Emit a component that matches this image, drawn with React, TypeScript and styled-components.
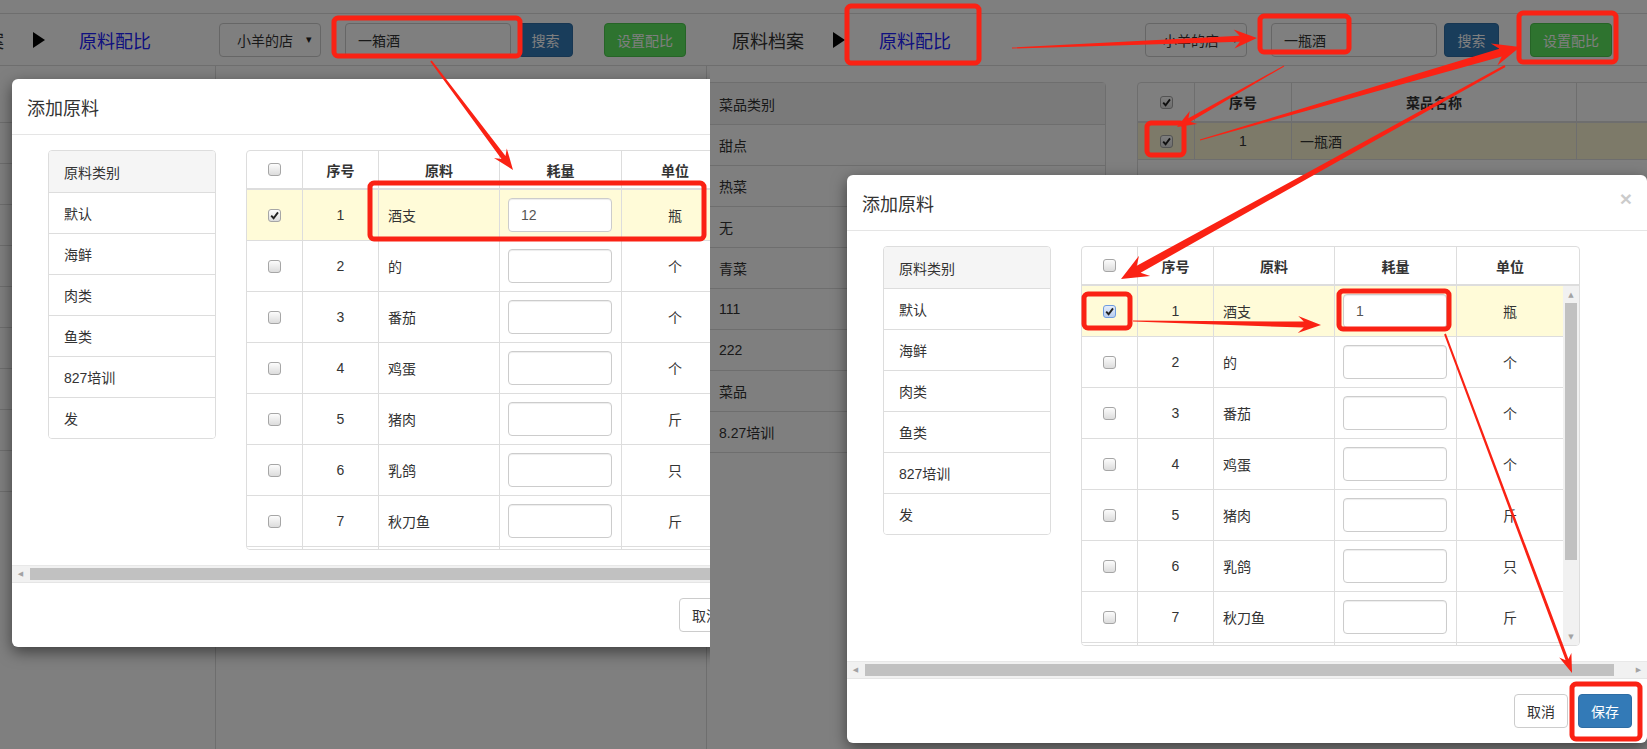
import React from "react"
import styled, { createGlobalStyle } from "styled-components"

const GlobalStyle = createGlobalStyle`
  * { box-sizing: border-box; }
  body {
    margin: 0;
    background: #808080;
    color: #333;
    font-family: "Liberation Sans", Arial, "Noto Sans CJK SC", sans-serif;
    font-size: 14px;
  }
`

const categories = ["默认", "海鲜", "肉类", "鱼类", "827培训", "发"]

const materials = [
  { no: 1, name: "酒支", unit: "瓶" },
  { no: 2, name: "的", unit: "个" },
  { no: 3, name: "番茄", unit: "个" },
  { no: 4, name: "鸡蛋", unit: "个" },
  { no: 5, name: "猪肉", unit: "斤" },
  { no: 6, name: "乳鸽", unit: "只" },
  { no: 7, name: "秋刀鱼", unit: "斤" },
  { no: 8, name: "牛肉", unit: "斤" },
]

const dishCategories = ["甜点", "热菜", "无", "青菜", "111", "222", "菜品", "8.27培训"]

// red marks drawn on top of the two screenshots
const boxes = [
  [334, 18, 186, 38],
  [370, 183, 334, 56],
  [847, 6, 132, 57],
  [1260, 16, 89, 36],
  [1519, 13, 97, 49],
  [1147, 123, 37, 32],
  [1084, 294, 46, 34],
  [1339, 291, 110, 38],
  [1572, 684, 68, 55],
]

type Arrow = { from: [number, number]; to: [number, number]; w1: number; w2: number; head: number; hw: number }

const arrows: Arrow[] = [
  { from: [431, 61], to: [513, 170], w1: 2, w2: 5, head: 21, hw: 16 },
  { from: [1012, 48], to: [1257, 38], w1: 1, w2: 6, head: 23, hw: 19 },
  { from: [1284, 66], to: [1177, 127], w1: 1, w2: 4, head: 19, hw: 15 },
  { from: [1200, 140], to: [1520, 47], w1: 1, w2: 8, head: 27, hw: 23 },
  { from: [1505, 66], to: [1121, 279], w1: 2, w2: 8, head: 27, hw: 23 },
  { from: [1133, 321], to: [1321, 325], w1: 1, w2: 6, head: 23, hw: 17 },
  { from: [1445, 334], to: [1572, 673], w1: 2, w2: 3, head: 19, hw: 13 },
]

function arrowPoints({ from, to, w1, w2, head, hw }: Arrow) {
  const [x1, y1] = from
  const [x2, y2] = to
  const len = Math.hypot(x2 - x1, y2 - y1)
  const ux = (x2 - x1) / len
  const uy = (y2 - y1) / len
  const nx = -uy
  const ny = ux
  const jx = x2 - ux * head * 0.75
  const jy = y2 - uy * head * 0.75
  const bx = x2 - ux * head
  const by = y2 - uy * head
  const pts = [
    [x1 + (nx * w1) / 2, y1 + (ny * w1) / 2],
    [jx + (nx * w2) / 2, jy + (ny * w2) / 2],
    [bx + (nx * hw) / 2, by + (ny * hw) / 2],
    [x2, y2],
    [bx - (nx * hw) / 2, by - (ny * hw) / 2],
    [jx - (nx * w2) / 2, jy - (ny * w2) / 2],
    [x1 - (nx * w1) / 2, y1 - (ny * w1) / 2],
  ]
  return pts.map((p) => p.map((v) => v.toFixed(1)).join(",")).join(" ")
}

function CheckMark({ checked, focus }: { checked?: boolean; focus?: boolean }) {
  return (
    <CheckBox $focus={focus}>
      {checked && (
        <svg width="9" height="9" viewBox="0 0 9 9">
          <path d="M1.2 4.6 L3.6 7.2 L8 1.4" stroke="#222" strokeWidth="1.9" fill="none" />
        </svg>
      )}
    </CheckBox>
  )
}

function PageHeader({ shift, gap, keyword }: { shift: number; gap: number; keyword: string }) {
  return (
    <Header>
      <Crumbs $shift={shift}>
        <span>原料档案</span>
        <CrumbArrow width="12" height="16" viewBox="0 0 12 16">
          <polygon points="0,0 12,8 0,16" fill="#000" />
        </CrumbArrow>
        <CrumbActive>原料配比</CrumbActive>
      </Crumbs>
      <Controls $gap={gap}>
        <StoreSelect>
          <span>小羊的店</span>
          <Caret>▾</Caret>
        </StoreSelect>
        <SearchBox>{keyword}</SearchBox>
        <PageButton $variant="primary" $w={55}>搜索</PageButton>
        <PageButton $variant="success" $w={82}>设置配比</PageButton>
      </Controls>
    </Header>
  )
}

function AddMaterialModal({ top, left, qty, focus }: { top: number; left: number; qty: string; focus?: boolean }) {
  return (
    <Modal $top={top} $left={left}>
      <ModalHeader>
        <ModalTitle>添加原料</ModalTitle>
        <CloseX>×</CloseX>
      </ModalHeader>
      <ModalBody>
        <CategoryList>
          <CategoryItem $head>原料类别</CategoryItem>
          {categories.map((c) => (
            <CategoryItem key={c}>{c}</CategoryItem>
          ))}
        </CategoryList>
        <MaterialTable>
          <HeadRow>
            <HeadCell><CheckMark /></HeadCell>
            <HeadCell>序号</HeadCell>
            <HeadCell>原料</HeadCell>
            <HeadCell>耗量</HeadCell>
            <HeadCell $last>单位</HeadCell>
            <span />
          </HeadRow>
          <BodyArea>
            <Rows>
              {materials.map((m, i) => (
                <BodyRow key={m.no} $selected={i === 0}>
                  <Cell $align="center"><CheckMark checked={i === 0} focus={focus && i === 0} /></Cell>
                  <Cell $align="center">{m.no}</Cell>
                  <Cell>{m.name}</Cell>
                  <Cell $pad={8}><QtyInput readOnly value={i === 0 ? qty : ""} /></Cell>
                  <Cell $align="center" $last>{m.unit}</Cell>
                </BodyRow>
              ))}
            </Rows>
            <VScroll>
              <ScrollArrow>▲</ScrollArrow>
              <VThumb />
              <ScrollArrow $end>▼</ScrollArrow>
            </VScroll>
          </BodyArea>
        </MaterialTable>
      </ModalBody>
      <HScroll>
        <ScrollArrow $wide>◀</ScrollArrow>
        <HThumb />
        <ScrollArrow $wide $end>▶</ScrollArrow>
      </HScroll>
      <ModalFooter>
        <FooterButton $primary={false}>取消</FooterButton>
        <FooterButton $primary>保存</FooterButton>
      </ModalFooter>
    </Modal>
  )
}

export default function App() {
  return (
    <Canvas>
      <GlobalStyle />
      <Shot $width={710}>
        <Page>
          <TopStrip />
          <PageHeader shift={-68} gap={68} keyword="一箱酒" />
          <LeftBody>
            <SideCol>
              {Array.from({ length: 10 }).map((_, i) => (
                <SideRow key={i} />
              ))}
            </SideCol>
            <MainCol />
          </LeftBody>
        </Page>
        <Backdrop />
        <AddMaterialModal top={79} left={12} qty="12" />
      </Shot>
      <Shot $width={937}>
        <Page>
          <TopStrip />
          <PageHeader shift={22} gap={194} keyword="一瓶酒" />
          <RightBody>
            <DishPanel>
              <DishRow $head>菜品类别</DishRow>
              {dishCategories.map((d) => (
                <DishRow key={d}>{d}</DishRow>
              ))}
            </DishPanel>
            <DishTable>
              <DishHead>
                <DishCell $align="center"><CheckMark checked /></DishCell>
                <DishCell $align="center">序号</DishCell>
                <DishCell $align="center">菜品名称</DishCell>
                <DishCell />
              </DishHead>
              <DishBodyRow $selected>
                <DishCell $align="center"><CheckMark checked /></DishCell>
                <DishCell $align="center">1</DishCell>
                <DishCell>一瓶酒</DishCell>
                <DishCell />
              </DishBodyRow>
            </DishTable>
          </RightBody>
        </Page>
        <Backdrop />
        <AddMaterialModal top={175} left={137} qty="1" focus />
      </Shot>
      <Marks width="1647" height="749" viewBox="0 0 1647 749">
        {boxes.map(([x, y, w, h], i) => (
          <rect key={i} x={x} y={y} width={w} height={h} rx="4" fill="none" stroke="#fa2214" strokeWidth="5" />
        ))}
        {arrows.map((a, i) => (
          <polygon key={i} points={arrowPoints(a)} fill="#fa2214" />
        ))}
      </Marks>
    </Canvas>
  )
}

const Canvas = styled.div`
  position: relative;
  display: flex;
  width: 1647px;
  height: 749px;
  overflow: hidden;
`

const Shot = styled.div<{ $width: number }>`
  position: relative;
  flex: 0 0 ${({ $width }) => $width}px;
  height: 100%;
  overflow: hidden;
  background: #fff;
`

const Page = styled.div`
  display: flex;
  flex-direction: column;
  height: 100%;
`

const TopStrip = styled.div`
  flex: none;
  height: 14px;
  border-bottom: 1px solid #ddd;
`

const Header = styled.div`
  flex: none;
  height: 52px;
  display: flex;
  align-items: center;
  border-bottom: 1px solid #ddd;
  white-space: nowrap;
`

const Crumbs = styled.div<{ $shift: number }>`
  display: flex;
  align-items: center;
  margin-left: ${({ $shift }) => $shift}px;
  font-size: 18px;
  color: #333;
`

const CrumbArrow = styled.svg`
  margin: 0 34px 0 29px;
`

const CrumbActive = styled.span`
  color: #2020ff;
`

const Controls = styled.div<{ $gap: number }>`
  display: flex;
  align-items: center;
  margin-left: ${({ $gap }) => $gap}px;
  font-size: 14px;
`

const StoreSelect = styled.div`
  width: 102px;
  height: 34px;
  display: flex;
  align-items: center;
  justify-content: space-between;
  padding: 0 8px 0 17px;
  border: 1px solid #ccc;
  border-radius: 4px;
`

const Caret = styled.span`
  font-size: 11px;
  color: #222;
`

const SearchBox = styled.div`
  width: 166px;
  height: 34px;
  margin-left: 24px;
  display: flex;
  align-items: center;
  padding: 0 12px;
  border: 1px solid #ccc;
  border-radius: 4px;
`

const PageButton = styled.div<{ $variant: "primary" | "success"; $w: number }>`
  width: ${({ $w }) => $w}px;
  height: 34px;
  margin-left: ${({ $variant }) => ($variant === "primary" ? 7 : 31)}px;
  display: flex;
  align-items: center;
  justify-content: center;
  border-radius: 4px;
  color: #fff;
  background: ${({ $variant }) => ($variant === "primary" ? "#337ab7" : "#5ce65e")};
  border: 1px solid ${({ $variant }) => ($variant === "primary" ? "#2e6da4" : "#4cc94e")};
`

const LeftBody = styled.div`
  flex: 1;
  display: flex;
`

const SideCol = styled.div`
  width: 216px;
  padding-top: 16px;
  border-right: 1px solid #ddd;
`

const SideRow = styled.div`
  height: 41px;
  border-bottom: 1px solid #ddd;
`

const MainCol = styled.div`
  width: 491px;
  border-right: 1px solid #ddd;
`

const RightBody = styled.div`
  flex: 1;
  display: flex;
  align-items: flex-start;
  padding-top: 16px;
`

const DishPanel = styled.div`
  flex: none;
  width: 403px;
  margin-left: -7px;
  border: 1px solid #ddd;
  border-radius: 4px;
`

const DishRow = styled.div<{ $head?: boolean }>`
  height: 41px;
  display: flex;
  align-items: center;
  padding-left: 15px;
  background: ${({ $head }) => ($head ? "#f5f5f5" : "#fff")};
  & + & {
    border-top: 1px solid #ddd;
  }
`

const DishTable = styled.div`
  flex: none;
  width: 600px;
  height: 320px;
  margin-left: 31px;
  border: 1px solid #ddd;
  border-radius: 4px;
`

const DishHead = styled.div`
  display: grid;
  grid-template-columns: 57px 97px 285px 1fr;
  height: 40px;
  border-bottom: 2px solid #ddd;
  font-weight: bold;
`

const DishBodyRow = styled.div<{ $selected?: boolean }>`
  display: grid;
  grid-template-columns: 57px 97px 285px 1fr;
  height: 37px;
  border-bottom: 1px solid #ddd;
  background: ${({ $selected }) => ($selected ? "#faf5d2" : "#fff")};
`

const DishCell = styled.div<{ $align?: "center" }>`
  display: flex;
  align-items: center;
  justify-content: ${({ $align }) => ($align === "center" ? "center" : "flex-start")};
  padding: 0 8px;
  border-right: 1px solid #ddd;
`

const Backdrop = styled.div`
  position: absolute;
  inset: 0;
  z-index: 1;
  background: rgba(0, 0, 0, 0.5);
`

const Modal = styled.div<{ $top: number; $left: number }>`
  position: absolute;
  top: ${({ $top }) => $top}px;
  left: ${({ $left }) => $left}px;
  z-index: 2;
  width: 800px;
  height: 568px;
  display: flex;
  flex-direction: column;
  overflow: hidden;
  background: #fff;
  border-radius: 6px;
  box-shadow: 0 5px 15px rgba(0, 0, 0, 0.5);
`

const ModalHeader = styled.div`
  flex: none;
  height: 56px;
  display: flex;
  align-items: center;
  justify-content: space-between;
  padding: 0 15px;
  border-bottom: 1px solid #e5e5e5;
`

const ModalTitle = styled.h4`
  margin: 0;
  font-size: 18px;
  font-weight: normal;
  color: #333;
`

const CloseX = styled.span`
  margin-top: -8px;
  font-size: 21px;
  font-weight: bold;
  line-height: 1;
  color: #000;
  opacity: 0.2;
`

const ModalBody = styled.div`
  flex: none;
  height: 430px;
  display: flex;
  align-items: flex-start;
  padding: 15px 0 0 36px;
`

const CategoryList = styled.div`
  flex: none;
  width: 168px;
  border: 1px solid #ddd;
  border-radius: 4px;
  overflow: hidden;
`

const CategoryItem = styled.div<{ $head?: boolean }>`
  height: 41px;
  display: flex;
  align-items: center;
  padding-left: 15px;
  background: ${({ $head }) => ($head ? "#f5f5f5" : "#fff")};
  & + & {
    border-top: 1px solid #ddd;
  }
`

const MaterialTable = styled.div`
  flex: none;
  width: 499px;
  height: 400px;
  margin-left: 30px;
  display: flex;
  flex-direction: column;
  overflow: hidden;
  border: 1px solid #ddd;
  border-radius: 4px;
`

const HeadRow = styled.div`
  flex: none;
  display: grid;
  grid-template-columns: 56px 76px 121px 122px 106px 16px;
  height: 39px;
  border-bottom: 2px solid #ddd;
  font-weight: bold;
`

const HeadCell = styled.div<{ $last?: boolean }>`
  display: flex;
  align-items: center;
  justify-content: center;
  border-right: ${({ $last }) => ($last ? "none" : "1px solid #ddd")};
`

const BodyArea = styled.div`
  flex: 1;
  display: flex;
  min-height: 0;
`

const Rows = styled.div`
  flex: 1;
  overflow: hidden;
`

const BodyRow = styled.div<{ $selected?: boolean }>`
  display: grid;
  grid-template-columns: 56px 76px 121px 122px 1fr;
  height: 51px;
  border-bottom: 1px solid #ddd;
  background: ${({ $selected }) => ($selected ? "#fffbd8" : "#fff")};
`

const Cell = styled.div<{ $align?: "center"; $last?: boolean; $pad?: number }>`
  display: flex;
  align-items: center;
  justify-content: ${({ $align }) => ($align === "center" ? "center" : "flex-start")};
  padding: 0 ${({ $pad }) => $pad ?? 9}px;
  border-right: ${({ $last }) => ($last ? "none" : "1px solid #ddd")};
`

const QtyInput = styled.input`
  width: 104px;
  height: 34px;
  padding: 0 12px;
  font: inherit;
  color: #555;
  border: 1px solid #ccc;
  border-radius: 4px;
  box-shadow: inset 0 1px 1px rgba(0, 0, 0, 0.075);
  outline: none;
`

const CheckBox = styled.span<{ $focus?: boolean }>`
  width: 13px;
  height: 13px;
  display: inline-flex;
  align-items: center;
  justify-content: center;
  border-radius: 3px;
  border: 1px solid ${({ $focus }) => ($focus ? "#6e9be0" : "#a6a6a6")};
  background: ${({ $focus }) => ($focus ? "linear-gradient(#e4edfa, #b9cdee)" : "linear-gradient(#fcfcfc, #dcdcdc)")};
`

const VScroll = styled.div`
  flex: none;
  width: 16px;
  display: flex;
  flex-direction: column;
  background: #f1f1f1;
`

const VThumb = styled.div`
  flex: none;
  height: 257px;
  margin: 0 2px;
  background: #c1c1c1;
`

const ScrollArrow = styled.div<{ $wide?: boolean; $end?: boolean }>`
  flex: none;
  width: ${({ $wide }) => ($wide ? "17px" : "auto")};
  height: ${({ $wide }) => ($wide ? "auto" : "17px")};
  margin-top: ${({ $end, $wide }) => ($end && !$wide ? "auto" : "0")};
  margin-left: ${({ $end, $wide }) => ($end && $wide ? "16px" : "0")};
  display: flex;
  align-items: center;
  justify-content: center;
  font-family: "DejaVu Sans", sans-serif;
  font-size: 7px;
  color: #a3a3a3;
`

const HScroll = styled.div`
  flex: none;
  height: 17px;
  display: flex;
  background: #f1f1f1;
  border-top: 1px solid #e8e8e8;
`

const HThumb = styled.div`
  flex: 1;
  margin: 2px 0 2px 1px;
  background: #c1c1c1;
`

const ModalFooter = styled.div`
  flex: 1;
  display: flex;
  justify-content: flex-end;
  align-items: flex-start;
  gap: 10px;
  padding: 15px;
  border-top: 1px solid #e5e5e5;
`

const FooterButton = styled.div<{ $primary: boolean }>`
  width: 54px;
  height: 34px;
  display: flex;
  align-items: center;
  justify-content: center;
  border-radius: 4px;
  color: ${({ $primary }) => ($primary ? "#fff" : "#333")};
  background: ${({ $primary }) => ($primary ? "#337ab7" : "#fff")};
  border: 1px solid ${({ $primary }) => ($primary ? "#2e6da4" : "#ccc")};
`

const Marks = styled.svg`
  position: absolute;
  top: 0;
  left: 0;
  z-index: 10;
  pointer-events: none;
`
